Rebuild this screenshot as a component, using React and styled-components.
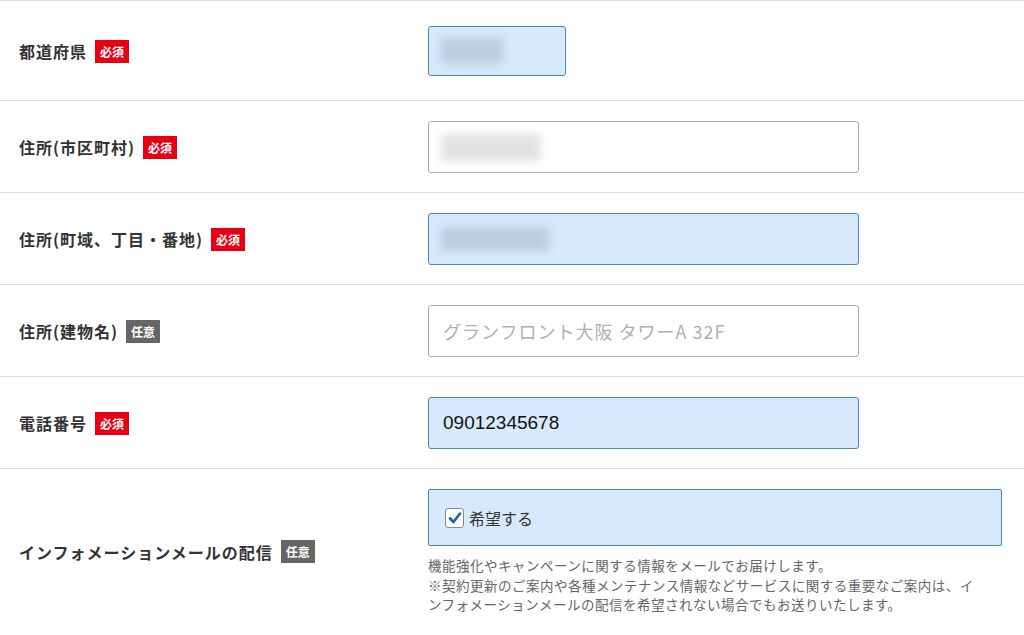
import React from 'react'
import styled, { createGlobalStyle } from 'styled-components'

const GlobalStyle = createGlobalStyle`
  html, body {
    margin: 0;
    padding: 0;
    background: #fff;
  }
  body {
    font-family: "Noto Sans CJK JP", "Noto Sans", sans-serif;
    color: #333;
  }
`

const Form = styled.div`
  width: 1024px;
  border-top: 1px solid #dedede;
`

const Row = styled.div`
  display: flex;
  align-items: center;
  border-bottom: 1px solid #dedede;
  padding: ${p => p.$pad || '20px 0 19px'};
`

const LabelCell = styled.div`
  flex-shrink: 0;
  width: 409px;
  padding-left: 19px;
  display: flex;
  align-items: center;
  gap: 8px;
`

const LabelText = styled.span`
  font-size: 16px;
  font-weight: 700;
  letter-spacing: 1px;
  color: #333;
`

const Badge = styled.span`
  display: inline-flex;
  align-items: center;
  justify-content: center;
  width: 34px;
  height: 23px;
  font-size: 12px;
  font-weight: 700;
  color: #fff;
  background: ${p => (p.$required ? '#e60012' : '#666')};
`

const FieldCell = styled.div`
  flex: 1;
  padding-right: 21px;
  display: flex;
  flex-direction: column;
`

const InputBox = styled.div`
  box-sizing: border-box;
  width: ${p => p.$width || '431px'};
  height: ${p => p.$height || '52px'};
  border: 1px solid ${p => (p.$filled ? '#4a85c4' : '#aaa')};
  background: ${p => (p.$filled ? '#d7eafc' : '#fff')};
  border-radius: 3px;
  display: flex;
  align-items: center;
  padding: 0 15px 0 14px;
  font-size: 19px;
  color: #111;
  font-family: "Liberation Sans", "Noto Sans CJK JP", sans-serif;
`

const Placeholder = styled.span`
  color: #b0b0b0;
  font-family: "Noto Sans CJK JP", sans-serif;
  font-size: 18px;
  letter-spacing: 1px;
`

const Blurred = styled.span`
  display: block;
  width: ${p => p.$w}px;
  height: ${p => p.$h}px;
  margin-left: -2px;
  background: ${p => p.$color};
  filter: blur(4px);
`

const CheckPanel = styled.label`
  box-sizing: border-box;
  width: 574px;
  height: 57px;
  border: 1px solid #4a85c4;
  background: #d7eafc;
  border-radius: 2px;
  display: flex;
  align-items: center;
  gap: 5px;
  padding-left: 16px;
  font-size: 16px;
  color: #333;
`

const CheckBox = styled.span`
  box-sizing: border-box;
  width: 19px;
  height: 20px;
  border: 1px solid #888;
  border-radius: 3px;
  background: #fff;
  display: flex;
  align-items: center;
  justify-content: center;
`

const Help = styled.p`
  margin: 10px 0 0;
  font-size: 13.5px;
  line-height: 19.5px;
  letter-spacing: 0.5px;
  color: #666;
  width: 552px;
`

const Label = ({ text, required }) => (
  <LabelCell>
    <LabelText>{text}</LabelText>
    <Badge $required={required}>{required ? '必須' : '任意'}</Badge>
  </LabelCell>
)

const App = () => (
  <>
    <GlobalStyle />
    <Form>
      <Row $pad="25px 0 24px">
        <Label text="都道府県" required />
        <FieldCell>
          <InputBox $filled $width="138px" $height="50px">
            <Blurred $w={62} $h={26} $color="#bccde0" />
          </InputBox>
        </FieldCell>
      </Row>

      <Row>
        <Label text="住所(市区町村)" required />
        <FieldCell>
          <InputBox>
            <Blurred $w={100} $h={27} $color="#e2e2e2" />
          </InputBox>
        </FieldCell>
      </Row>

      <Row>
        <Label text="住所(町域、丁目・番地)" required />
        <FieldCell>
          <InputBox $filled>
            <Blurred $w={108} $h={24} $color="#bccbde" />
          </InputBox>
        </FieldCell>
      </Row>

      <Row>
        <Label text="住所(建物名)" />
        <FieldCell>
          <InputBox>
            <Placeholder>グランフロント大阪 タワーA 32F</Placeholder>
          </InputBox>
        </FieldCell>
      </Row>

      <Row>
        <Label text="電話番号" required />
        <FieldCell>
          <InputBox $filled>09012345678</InputBox>
        </FieldCell>
      </Row>

      <Row $pad="20px 0 22px">
        <Label text="インフォメーションメールの配信" />
        <FieldCell>
          <CheckPanel>
            <CheckBox>
              <svg width="14" height="14" viewBox="0 0 14 14">
                <path d="M2 7.5 L5.5 11 L12 2.5" fill="none" stroke="#1b5eb0" strokeWidth="2.6" strokeLinecap="round" strokeLinejoin="round" />
              </svg>
            </CheckBox>
            希望する
          </CheckPanel>
          <Help>
            機能強化やキャンペーンに関する情報をメールでお届けします。<br />
            ※契約更新のご案内や各種メンテナンス情報などサービスに関する重要なご案内は、インフォメーションメールの配信を希望されない場合でもお送りいたします。
          </Help>
        </FieldCell>
      </Row>
    </Form>
  </>
)

export default App
